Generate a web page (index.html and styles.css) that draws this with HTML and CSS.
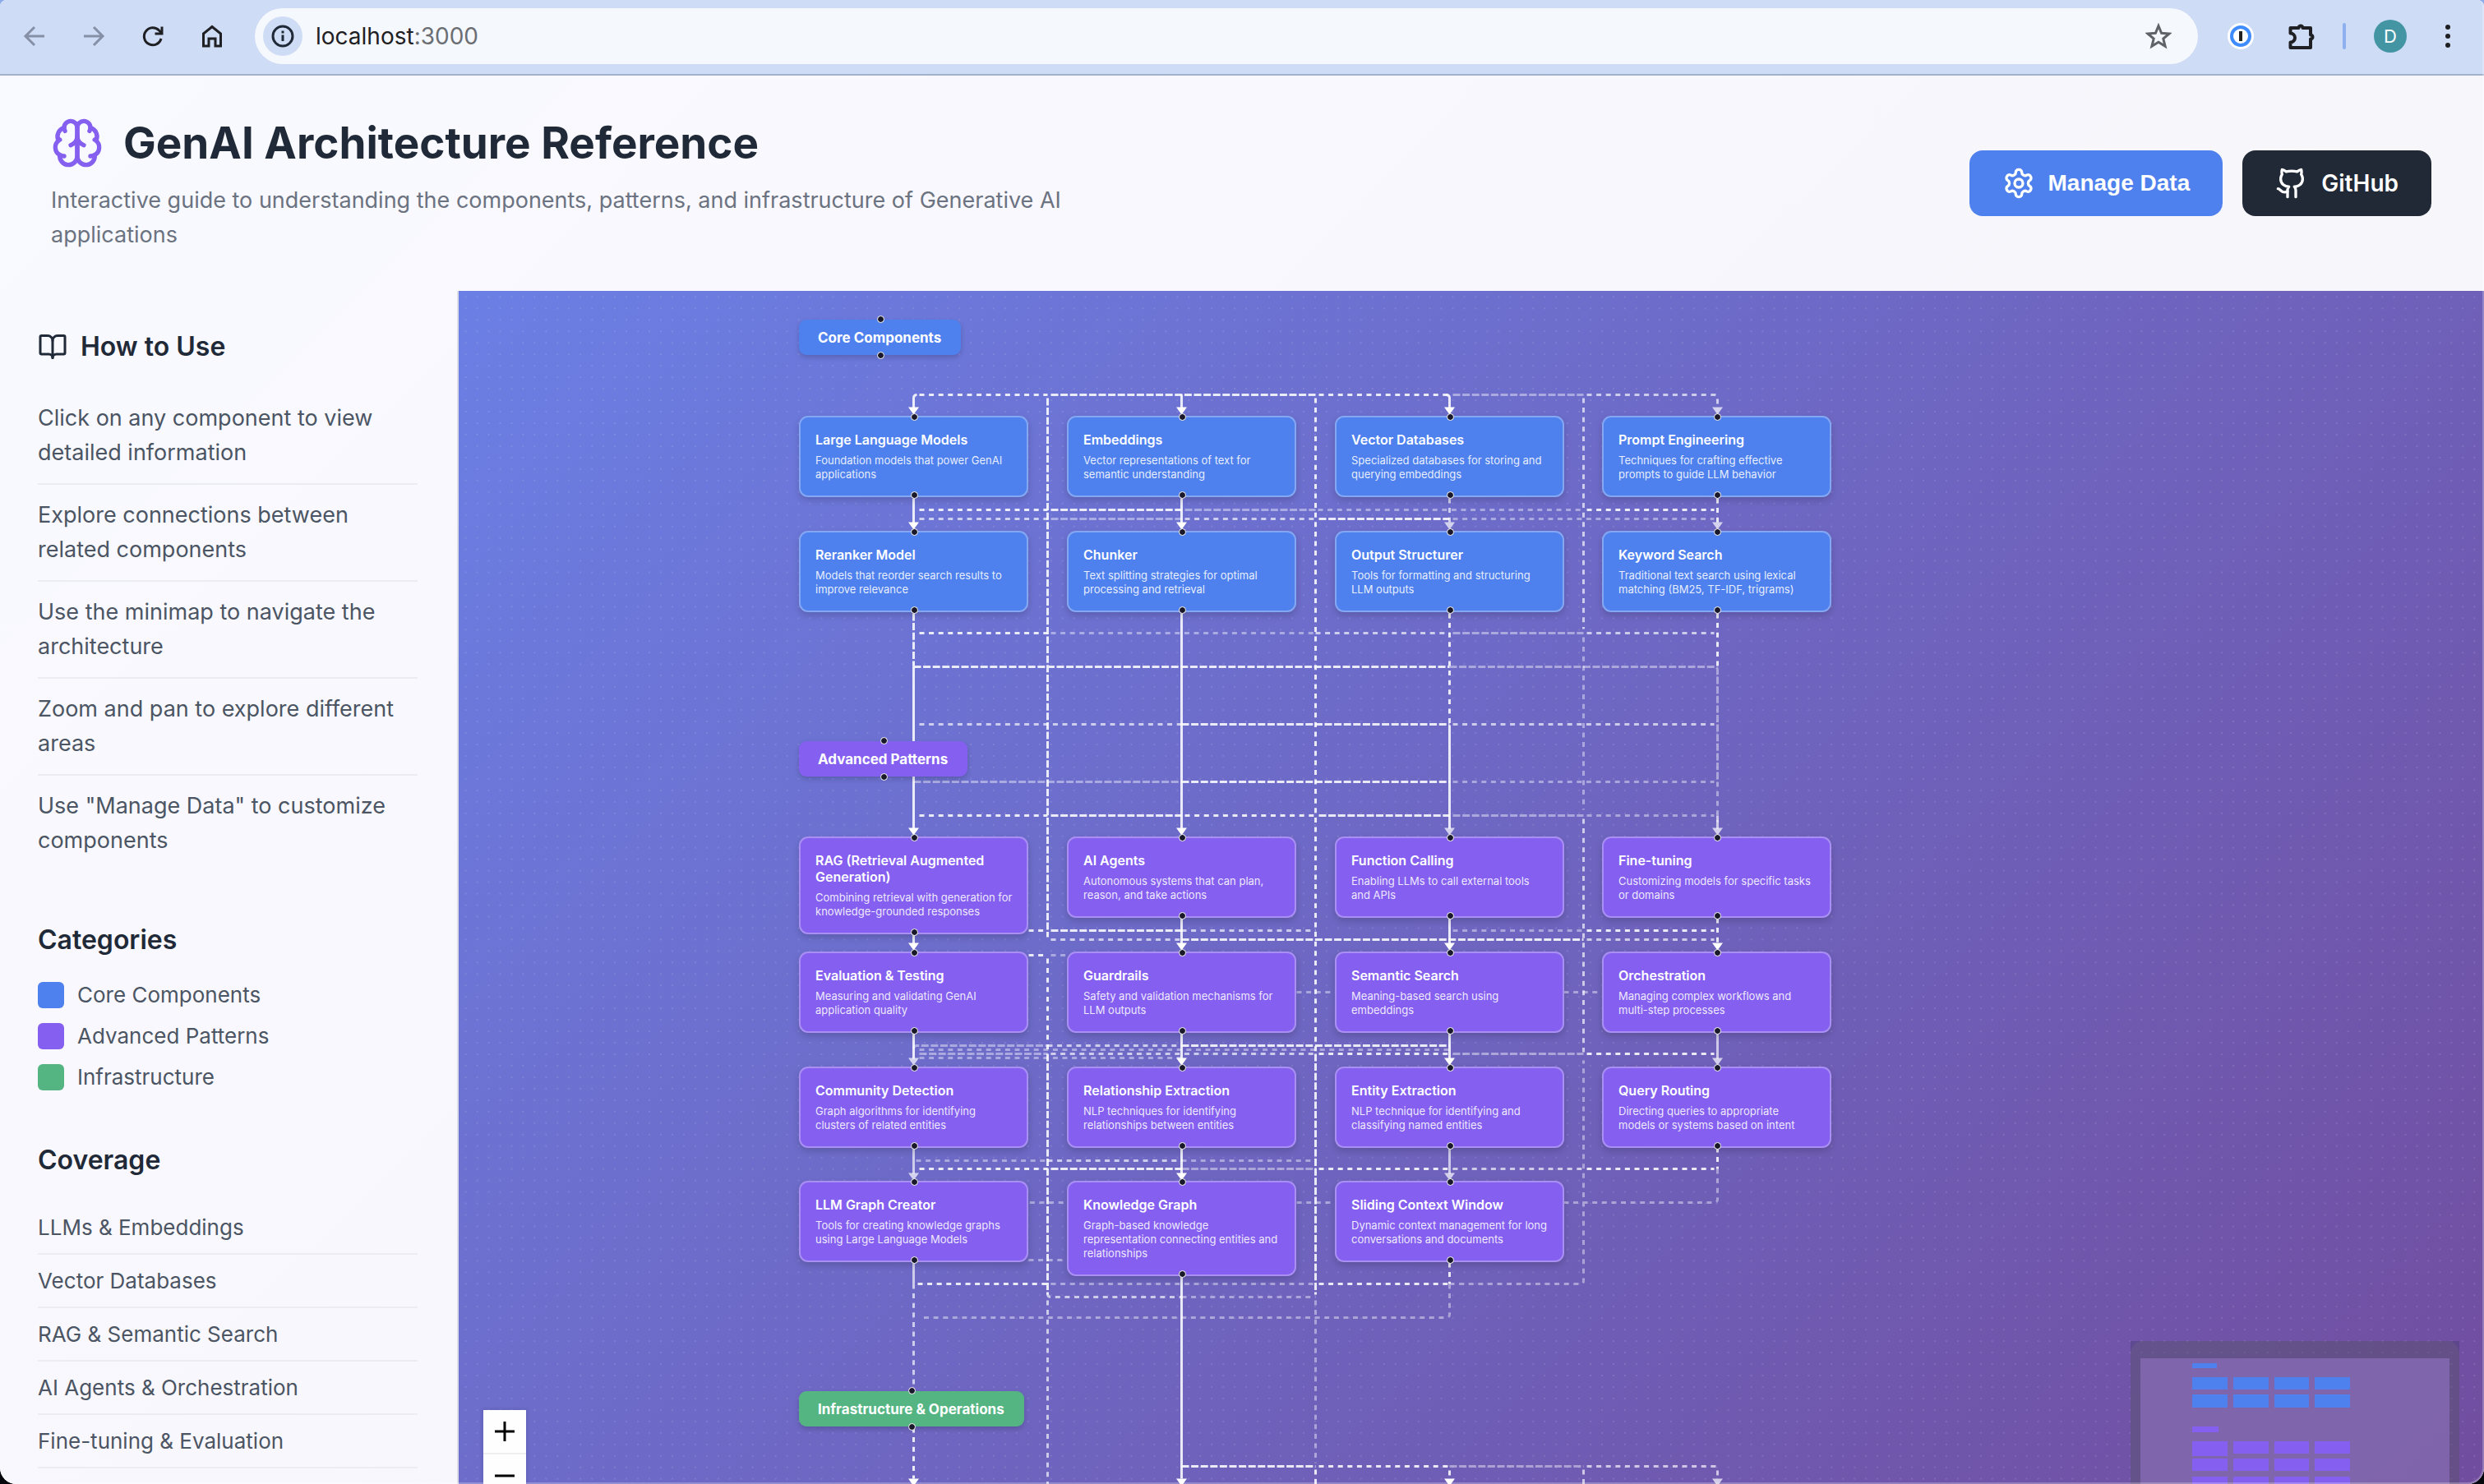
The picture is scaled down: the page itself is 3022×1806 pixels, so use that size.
FILE: index.html
```html
<!DOCTYPE html>
<html lang="en">
<head>
<meta charset="utf-8">
<title>GenAI Architecture Reference</title>
<link rel="stylesheet" href="styles.css">
</head>
<body>
<div class="window">
  <nav class="toolbar" aria-label="Browser toolbar">
    <div class="nav-buttons">
      <button class="tool muted" aria-label="Back"><svg viewBox="0 0 32 32"><path d="M28 16H5M16 5L5 16l11 11"/></svg></button>
      <button class="tool muted" aria-label="Forward"><svg viewBox="0 0 32 32"><path d="M4 16h23M16 5l11 11-11 11"/></svg></button>
      <button class="tool" aria-label="Reload"><svg viewBox="0 0 32 32"><path d="M26 19a10.500 10.500 0 1 1-2.500-10l3 3M27 4.500V13h-8.500"/></svg></button>
      <button class="tool" aria-label="Home"><svg viewBox="0 0 32 32"><path d="M5.500 13L16 4.500 26.500 13v15H20v-9h-8v9H5.500z"/></svg></button>
    </div>
    <div class="omnibox">
      <button class="site-info" aria-label="Site information"><svg viewBox="0 0 32 32"><circle cx="16" cy="16" r="12"/><path d="M16 14.500v7.500M16 9.500v3"/></svg></button>
      <div class="address"><span class="host">localhost</span>:3000</div>
      <button class="tool star" aria-label="Bookmark"><svg viewBox="0 0 32 32"><path d="M16 3.500l3.600 8.800 9.400.7-7.200 6.100 2.300 9.200-8.100-5-8.100 5 2.300-9.200L3 13l9.400-.7z"/></svg></button>
    </div>
    <div class="extensions">
      <button class="tool" aria-label="Password manager"><svg viewBox="0 0 32 32"><circle class="pw-back" cx="16" cy="16" r="16"/><circle class="pw-ring" cx="16" cy="16" r="11"/><path class="pw-key" d="M16 10v12"/></svg></button>
      <button class="tool" aria-label="Extensions"><svg class="puzzle" viewBox="0 0 36 36"><path d="M4.500 8H14.500a2.500 2.500 0 0 1 5 0H29V16.500a2.500 2.500 0 0 1 0 5V32H4.500V25.500a5.500 5.500 0 0 0 0-11z"/></svg></button>
      <span class="divider"></span>
      <button class="avatar" aria-label="Profile">D</button>
      <button class="tool menu" aria-label="Menu"><svg viewBox="0 0 32 32"><circle cx="16" cy="5" r="3"/><circle cx="16" cy="16" r="3"/><circle cx="16" cy="27" r="3"/></svg></button>
    </div>
  </nav>

  <div class="page">
    <header class="header">
      <div class="intro">
        <h1><svg class="icon brain" viewBox="0 0 24 24"><path d="M12 5a3 3 0 1 0-5.997.125 4 4 0 0 0-2.526 5.770 4 4 0 0 0 .556 6.588A4 4 0 1 0 12 18Z"/><path d="M12 5a3 3 0 1 1 5.997.125 4 4 0 0 1 2.526 5.770 4 4 0 0 1-.556 6.588A4 4 0 1 1 12 18Z"/><path d="M15 13a4.500 4.500 0 0 1-3-4 4.500 4.500 0 0 1-3 4"/><path d="M17.599 6.500a3 3 0 0 0 .399-1.375"/><path d="M6.003 5.125A3 3 0 0 0 6.401 6.500"/><path d="M3.477 10.896a4 4 0 0 1 .585-.396"/><path d="M19.938 10.500a4 4 0 0 1 .585.396"/><path d="M6 18a4 4 0 0 1-1.967-.516"/><path d="M19.967 17.484A4 4 0 0 1 18 18"/></svg>GenAI Architecture Reference</h1>
        <p>Interactive guide to understanding the components, patterns, and infrastructure of Generative AI applications</p>
      </div>
      <div class="actions">
        <button class="btn primary"><svg class="icon" viewBox="0 0 24 24"><path d="M12.220 2h-.440a2 2 0 0 0-2 2v.180a2 2 0 0 1-1 1.730l-.430.250a2 2 0 0 1-2 0l-.150-.080a2 2 0 0 0-2.730.730l-.220.380a2 2 0 0 0 .730 2.730l.150.100a2 2 0 0 1 1 1.720v.510a2 2 0 0 1-1 1.740l-.150.090a2 2 0 0 0-.730 2.730l.220.380a2 2 0 0 0 2.730.730l.150-.080a2 2 0 0 1 2 0l.430.250a2 2 0 0 1 1 1.730V20a2 2 0 0 0 2 2h.440a2 2 0 0 0 2-2v-.180a2 2 0 0 1 1-1.730l.430-.250a2 2 0 0 1 2 0l.150.080a2 2 0 0 0 2.730-.730l.220-.390a2 2 0 0 0-.730-2.730l-.150-.080a2 2 0 0 1-1-1.740v-.500a2 2 0 0 1 1-1.740l.150-.090a2 2 0 0 0 .730-2.730l-.220-.380a2 2 0 0 0-2.730-.730l-.150.080a2 2 0 0 1-2 0l-.430-.250a2 2 0 0 1-1-1.730V4a2 2 0 0 0-2-2z"/><circle cx="12" cy="12" r="3"/></svg>Manage Data</button>
        <a class="btn dark" href="#github"><svg class="icon" viewBox="0 0 24 24"><path d="M15 22v-4a4.800 4.800 0 0 0-1-3.500c3 0 6-2 6-5.500.080-1.250-.270-2.480-1-3.500.280-1.150.280-2.350 0-3.500 0 0-1 0-3 1.500-2.640-.500-5.360-.500-8 0C6 2 5 2 5 2c-.300 1.150-.300 2.350 0 3.500A5.403 5.403 0 0 0 4 9c0 3.500 3 5.500 6 5.500-.390.490-.680 1.050-.850 1.650-.170.600-.220 1.230-.150 1.850v4"/><path d="M9 18c-4.510 2-5-2-7-2"/></svg>GitHub</a>
      </div>
    </header>

    <div class="content">
      <aside class="sidebar">
        <section>
          <h2><svg class="icon book" viewBox="0 0 24 24"><path d="M12 7v14"/><path d="M3 18a1 1 0 0 1-1-1V4a1 1 0 0 1 1-1h5a4 4 0 0 1 4 4 4 4 0 0 1 4-4h5a1 1 0 0 1 1 1v13a1 1 0 0 1-1 1h-6a3 3 0 0 0-3 3 3 3 0 0 0-3-3z"/></svg>How to Use</h2>
          <ul class="tips">
            <li>Click on any component to view detailed information</li>
            <li>Explore connections between related components</li>
            <li>Use the minimap to navigate the architecture</li>
            <li>Zoom and pan to explore different areas</li>
            <li>Use "Manage Data" to customize components</li>
          </ul>
        </section>
        <section>
          <h2>Categories</h2>
          <ul class="legend">
            <li><span class="swatch core"></span>Core Components</li>
            <li><span class="swatch advanced"></span>Advanced Patterns</li>
            <li><span class="swatch infra"></span>Infrastructure</li>
          </ul>
        </section>
        <section>
          <h2>Coverage</h2>
          <ul class="coverage">
            <li>LLMs &amp; Embeddings</li>
            <li>Vector Databases</li>
            <li>RAG &amp; Semantic Search</li>
            <li>AI Agents &amp; Orchestration</li>
            <li>Fine-tuning &amp; Evaluation</li>
          </ul>
        </section>
      </aside>

      <main class="canvas">
        <svg class="edges" aria-hidden="true">
          <defs>
            <pattern id="dots" x="1.600" y="0.400" width="13.964" height="13.964" patternUnits="userSpaceOnUse"><circle cx="7" cy="7" r="1"/></pattern>
            <path id="arrow" d="M-6.500 0H6.500L0 9Z"/>
          </defs>
          <rect class="dots" width="100%" height="100%" fill="url(#dots)"/>
          <g transform="translate(-557.500 -353.500)">
            <path class="dash faint" d="M1603 620H1923M1767 631H2085M1278 770H1600M1767 951H2085M1930 992H2085M1767 1132H1926M1278 1162H1298M1577 1207H1624M1902 1207H1949M1118 1277H1763M1118 1287H1437M1114 1412H1274M1437 1412H1600M2089 1422V1459Q2089 1463 2085 1463H1251M1251 1533H1298M1278 1562H1600M1763 1562H1922Q1926 1562 1926 1558V1290M1437 1578H1600M1763 1562V1599Q1763 1603 1759 1603H1118M1926 775V985M1600 1582V1780M2089 951V1000"/>
            <path class="dash mid" d="M1930 480H2085Q2089 480 2089 484V497M1118 631H1274M1441 631H1600M1926 484V765M1600 770H1763M1930 770H2085M1118 881H1437M1767 881H2085M1437 1132H1600M1278 1143H1437M1930 1143H2085M1274 1272H1437M1278 1282H1600M1274 1412H1437M1767 1422H1926M1274 1574Q1274 1578 1278 1578H1437M1111 1562V1690M1274 1582V1960M1930 1784H2085Q2089 1784 2089 1788V1799M1926 996V1280M1926 1788V1960M1763 606V636"/>
            <path class="dash strong" d="M1118 480H1274M1604 480H1763M1600 484V1280M1118 620H1274M1930 620H2085M2089 606V636M1763 746V882M2089 746V811M1118 770H1274M1118 992H1274M1441 992H1600M1251 1132H1274M1930 1132H2085M2089 1117V1148M1251 1162H1274M1274 1166V1280M1604 1282H1763M1930 1282H2085M1118 1422H1274M1604 1422H1763M1930 1422H2085M2089 1396V1422M1116 1562H1274M1604 1562H1763M1763 1536V1562M1111 1737V1799M1604 1784H1759Q1763 1784 1763 1788V1799M1600 1788V1960"/>
            <path class="dense faint" d="M1767 480H1926M1441 620H1600M1278 631H1437M1767 770H1926M1763 811H2085Q2089 811 2089 815V948M1111 951H1437M1767 992H1926M1111 1276Q1111 1272 1115 1272H1274M1118 1282H1274M1767 1282H1926M1437 1422H1600M1763 1784H1926"/>
            <path class="dense strong" d="M1278 480H1600M1274 484V1140M1278 620H1437M1604 631H1763M1111 811H1763M1437 881H1763M1437 951H1763M1278 992H1437M1604 992H1763M1278 1132H1437M1437 1143H1926M1437 1272H1763M1274 1282V1575M1600 1282V1575M1278 1422H1437M1437 1784H1600M1111 746V811"/>
            <path class="line mid" d="M2089 992V1008M2089 1257V1288M1111 1396V1428M1763 1396V1428M1111 1536V1562"/>
            <path class="line strong" d="M1111 497V484Q1111 480 1115 480M1111 606V636M1111 811V1008M1111 1137V1148M1111 1257V1288M1437 480V497M1437 606V636M1437 746V1008M1437 1117V1148M1437 1257V1288M1437 1396V1428M1437 1553V1799M1759 480Q1763 480 1763 484V497M1763 882V1008M1763 1117V1148M1763 1257V1288"/>
            <g class="heads">
              <use href="#arrow" x="1111" y="495"/><use href="#arrow" x="1437" y="495"/><use href="#arrow" x="1763" y="495"/><use class="pale" href="#arrow" x="2089" y="495"/>
              <use href="#arrow" x="1111" y="635"/><use href="#arrow" x="1437" y="635"/><use class="pale" href="#arrow" x="1763" y="635"/><use class="pale" href="#arrow" x="2089" y="635"/>
              <use href="#arrow" x="1111" y="1007"/><use href="#arrow" x="1437" y="1007"/><use class="pale" href="#arrow" x="1763" y="1007"/><use class="pale" href="#arrow" x="2089" y="1007"/>
              <use href="#arrow" x="1111" y="1147"/><use href="#arrow" x="1437" y="1147"/><use href="#arrow" x="1763" y="1147"/><use href="#arrow" x="2089" y="1147"/>
              <use class="pale" href="#arrow" x="1111" y="1287"/><use href="#arrow" x="1437" y="1287"/><use href="#arrow" x="1763" y="1287"/><use class="pale" href="#arrow" x="2089" y="1287"/>
              <use class="pale" href="#arrow" x="1111" y="1427"/><use href="#arrow" x="1437" y="1427"/><use class="pale" href="#arrow" x="1763" y="1427"/>
              <use href="#arrow" x="1111" y="1799"/><use href="#arrow" x="1437" y="1799"/><use href="#arrow" x="1763" y="1799"/><use class="pale" href="#arrow" x="2089" y="1799"/>
            </g>
          </g>
        </svg>

        <div class="group core col1 head1">Core Components</div>
        <div class="group advanced col1 head2">Advanced Patterns</div>
        <div class="group infra col1 head3">Infrastructure &amp; Operations</div>

        <article class="node core col1 row1"><h3>Large Language Models</h3><p>Foundation models that power GenAI applications</p></article>
        <article class="node core col2 row1"><h3>Embeddings</h3><p>Vector representations of text for semantic understanding</p></article>
        <article class="node core col3 row1"><h3>Vector Databases</h3><p>Specialized databases for storing and querying embeddings</p></article>
        <article class="node core col4 row1"><h3>Prompt Engineering</h3><p>Techniques for crafting effective prompts to guide LLM behavior</p></article>
        <article class="node core col1 row2"><h3>Reranker Model</h3><p>Models that reorder search results to improve relevance</p></article>
        <article class="node core col2 row2"><h3>Chunker</h3><p>Text splitting strategies for optimal processing and retrieval</p></article>
        <article class="node core col3 row2"><h3>Output Structurer</h3><p>Tools for formatting and structuring LLM outputs</p></article>
        <article class="node core col4 row2"><h3>Keyword Search</h3><p>Traditional text search using lexical matching (BM25, TF-IDF, trigrams)</p></article>

        <article class="node advanced col1 row3"><h3>RAG (Retrieval Augmented Generation)</h3><p>Combining retrieval with generation for knowledge-grounded responses</p></article>
        <article class="node advanced col2 row3"><h3>AI Agents</h3><p>Autonomous systems that can plan, reason, and take actions</p></article>
        <article class="node advanced col3 row3"><h3>Function Calling</h3><p>Enabling LLMs to call external tools and APIs</p></article>
        <article class="node advanced col4 row3"><h3>Fine-tuning</h3><p>Customizing models for specific tasks or domains</p></article>
        <article class="node advanced col1 row4"><h3>Evaluation &amp; Testing</h3><p>Measuring and validating GenAI application quality</p></article>
        <article class="node advanced col2 row4"><h3>Guardrails</h3><p>Safety and validation mechanisms for LLM outputs</p></article>
        <article class="node advanced col3 row4"><h3>Semantic Search</h3><p>Meaning-based search using embeddings</p></article>
        <article class="node advanced col4 row4"><h3>Orchestration</h3><p>Managing complex workflows and multi-step processes</p></article>
        <article class="node advanced col1 row5"><h3>Community Detection</h3><p>Graph algorithms for identifying clusters of related entities</p></article>
        <article class="node advanced col2 row5"><h3>Relationship Extraction</h3><p>NLP techniques for identifying relationships between entities</p></article>
        <article class="node advanced col3 row5"><h3>Entity Extraction</h3><p>NLP technique for identifying and classifying named entities</p></article>
        <article class="node advanced col4 row5"><h3>Query Routing</h3><p>Directing queries to appropriate models or systems based on intent</p></article>
        <article class="node advanced col1 row6"><h3>LLM Graph Creator</h3><p>Tools for creating knowledge graphs using Large Language Models</p></article>
        <article class="node advanced col2 row6"><h3>Knowledge Graph</h3><p>Graph-based knowledge representation connecting entities and relationships</p></article>
        <article class="node advanced col3 row6"><h3>Sliding Context Window</h3><p>Dynamic context management for long conversations and documents</p></article>

        <div class="controls">
          <button aria-label="Zoom in"><svg viewBox="0 0 24 24"><path d="M0 12h24M12 0v24"/></svg></button>
          <button aria-label="Zoom out"><svg viewBox="0 0 24 24"><path d="M0 12h24"/></svg></button>
          <button aria-label="Fit view"><svg viewBox="0 0 24 24"><path d="M2 9V2h7M15 2h7v7M22 15v7h-7M9 22H2v-7"/></svg></button>
          <button aria-label="Lock"><svg viewBox="0 0 24 24"><path d="M4 11h16v11H4zM8 11V7a4 4 0 0 1 8 0v4"/></svg></button>
        </div>

        <div class="minimap">
          <svg viewBox="0 0 400 300" aria-hidden="true">
            <rect class="mini-frame" width="400" height="300" rx="15"/>
            <rect class="mini-view" x="12" y="21" width="376" height="222"/>
            <path class="mini-core" d="M75 27h30v6H75zM75 44h43v15H75zM125 44h43v15h-43zM175 44h42v15h-42zM224 44h43v15h-43zM75 65h43v16H75zM125 65h43v16h-43zM175 65h42v16h-42zM224 65h43v16h-43z"/>
            <path class="mini-advanced" d="M75 104h32v7H75zM75 122h43v18H75zM125 122h43v15h-43zM175 122h42v15h-42zM224 122h43v15h-43zM75 143h43v15H75zM125 143h43v15h-43zM175 143h42v15h-42zM224 143h43v15h-43zM75 165h43v15H75zM125 165h43v15h-43zM175 165h42v15h-42zM224 165h43v15h-43z"/>
          </svg>
        </div>
      </main>
    </div>
  </div>
</div>
</body>
</html>
```

FILE: styles.css
```css
* { box-sizing: border-box; }

body {
  margin: 0;
  background: linear-gradient(#8aaaea 0 50%, #05070c 50%);
  font-family: Inter, "Liberation Sans", sans-serif;
  color: #1f2937;
}

h1, h2, h3, p, ul { margin: 0; padding: 0; }
ul { list-style: none; }
button { font: inherit; border: 0; padding: 0; background: none; color: inherit; }

.window {
  position: relative;
  display: flex;
  flex-direction: column;
  height: 100vh;
  overflow: hidden;
  border-radius: 8px 8px 20px 20px;
  background: #f8f8fd;
}

/* light rim around the right and bottom window edges */
.window::after {
  content: "";
  position: absolute;
  inset: 0;
  border: solid rgba(255, 255, 255, .25);
  border-width: 0 2px 2px 0;
  border-radius: inherit;
  pointer-events: none;
}

/* Browser toolbar */
.toolbar {
  display: flex;
  flex: none;
  align-items: center;
  height: 92px;
  padding: 0 28px 2px 26px;
  border-bottom: 2px solid #a3b2cc;
  background: #cfdcf5;
}
.nav-buttons { display: flex; gap: 40px; margin-right: 36px; }
.tool { display: flex; color: #1f2023; }
.tool svg, .site-info svg {
  width: 32px;
  height: 32px;
  fill: none;
  stroke: currentColor;
  stroke-width: 3;
}
.tool .puzzle { width: 36px; height: 36px; stroke-width: 4; stroke-linejoin: round; }
.muted { color: #8590a6; }
.omnibox {
  display: flex;
  flex: 1;
  align-items: center;
  height: 68px;
  padding: 0 32px 0 10px;
  border-radius: 34px;
  background: #f5f8fd;
}
.site-info {
  display: flex;
  align-items: center;
  justify-content: center;
  width: 48px;
  height: 48px;
  border-radius: 50%;
  background: #cfdcf5;
}
.address { flex: 1; padding-left: 16px; font-size: 28px; line-height: 34px; color: #6b6e73; }
.host { color: #1f2023; }
.star { color: #5f6368; }
.extensions { display: flex; align-items: center; margin-left: 36px; }
.extensions .tool + .tool { margin-left: 40px; }
.pw-back { fill: #fff; stroke: none; }
.pw-ring { fill: #fff; stroke: #3f8cff; stroke-width: 4; }
.pw-key { stroke: #222; stroke-width: 4; }
.divider { width: 4px; height: 32px; margin: 0 34px 0 32px; border-radius: 2px; background: #8fb0ee; }
.avatar {
  width: 40px;
  height: 40px;
  margin-right: 34px;
  border-radius: 50%;
  background: #4495a4;
  color: #fff;
  font-size: 22px;
  line-height: 40px;
}
.menu svg { fill: currentColor; stroke: none; }

/* Page shell */
.page {
  display: flex;
  flex: none;
  flex-direction: column;
  background: linear-gradient(135deg, #f8faff, #f9f8fe 25%, #f7f6fb 60%);
}
.icon { flex: none; fill: none; stroke: currentColor; stroke-width: 2; stroke-linecap: round; stroke-linejoin: round; }

.header {
  display: flex;
  align-items: center;
  justify-content: space-between;
  padding: 47px 64px 47px 62px;
}
.intro { max-width: 1280px; }
.header h1 {
  display: flex;
  align-items: center;
  gap: 24px;
  height: 70px;
  margin-bottom: 14px;
  font-size: 53px;
  line-height: 70px;
  font-weight: 700;
}
.brain { width: 64px; height: 64px; color: #855fef; }
.header p { font-size: 27px; line-height: 42px; color: #6b7280; }
.actions { display: flex; gap: 24px; }
.btn {
  display: flex;
  align-items: center;
  gap: 16px;
  height: 80px;
  padding: 0 40px;
  border-radius: 16px;
  color: #fff;
  font-size: 28px;
  line-height: 34px;
  font-weight: 600;
  text-decoration: none;
}
.btn .icon { width: 40px; height: 40px; }
.primary { background: #4e81ee; font-family: "Liberation Sans", Arial, sans-serif; font-weight: 700; }
.dark { background: #212936; }

.content { display: flex; min-height: 1608px; }

/* Sidebar */
.sidebar {
  display: flex;
  flex: none;
  flex-direction: column;
  gap: 62px;
  width: 558px;
  padding: 46px 48px 0 46px;
  border-right: 2px solid #dcdde6;
}
.sidebar h2 {
  display: flex;
  align-items: center;
  gap: 16px;
  margin-bottom: 28px;
  font-size: 32px;
  line-height: 44px;
  font-weight: 600;
}
.book { width: 36px; height: 36px; }
.sidebar ul { color: #4b5563; }
.tips li { padding: 16px 0; border-bottom: 2px solid #ecedf1; font-size: 27px; line-height: 42px; }
.tips li:last-child { border-bottom: 0; }
.legend { display: flex; flex-direction: column; gap: 16px; font-size: 26px; line-height: 34px; }
.legend li { display: flex; align-items: center; gap: 16px; }
.swatch { width: 32px; height: 32px; border-radius: 6px; }
.coverage li { padding: 14px 0; border-bottom: 2px solid #ecedf1; font-size: 26px; line-height: 35px; }

.core { background: #4e81ee; }
.advanced { background: #855fef; }
.infra { background: #54b583; }

/* Diagram canvas */
.canvas {
  position: relative;
  flex: 1;
  min-width: 0;
  overflow: hidden;
  background: linear-gradient(135deg, #6b7fe4, #714b9c);
}
.edges { position: absolute; inset: 0; width: 100%; height: 100%; fill: none; stroke: #fff; stroke-width: 3; }
#dots circle { fill: rgba(255, 255, 255, .15); stroke: none; }
.dots { stroke: none; }
.dash { stroke-dasharray: 6 5.6; }
.dense { stroke-dasharray: 9 2.6; }
.faint { stroke-opacity: .42; }
.mid { stroke-opacity: .66; }
.strong { stroke-opacity: .86; }
.heads { fill: #fff; stroke: none; }
.pale { fill-opacity: .7; }

.group, .node { position: absolute; color: #fff; }
.group {
  height: 43px;
  padding: 0 24px 0 23px;
  border-radius: 9px;
  box-shadow: 0 3px 6px rgba(0, 0, 0, .18);
  font-size: 17px;
  line-height: 44px;
  font-weight: 700;
  white-space: nowrap;
}
.node {
  width: 279px;
  padding: 17px 16px 17px 18px;
  border: 2px solid rgba(255, 255, 255, .3);
  border-radius: 11px;
  box-shadow: 0 4px 8px rgba(0, 0, 0, .16);
}
.node h3 { margin-bottom: 7px; font-size: 16px; line-height: 20px; font-weight: 600; }
.node p { font-size: 13px; line-height: 17px; color: rgba(255, 255, 255, .88); }

/* connection handles */
.group::before, .group::after, .node::before, .node::after {
  content: "";
  position: absolute;
  left: 50%;
  width: 7px;
  height: 7px;
  margin-left: -4px;
  border: 1px solid #fff;
  border-radius: 50%;
  background: #1a192b;
}
.group::before, .node::before { top: -5px; }
.group::after { bottom: -5px; }
.node::after { bottom: -4px; }

.col1 { left: 414px; }
.col2 { left: 740px; }
.col3 { left: 1066px; }
.col4 { left: 1391px; }
.head1 { top: 35px; }
.head2 { top: 548px; }
.head3 { top: 1339px; }
.row1 { top: 152px; }
.row2 { top: 292px; }
.row3 { top: 664px; }
.row4 { top: 804px; }
.row5 { top: 944px; }
.row6 { top: 1083px; }

.controls { position: absolute; left: 30px; bottom: 30px; box-shadow: 0 0 4px 2px rgba(0, 0, 0, .08); }
.controls button {
  display: flex;
  align-items: center;
  justify-content: center;
  width: 52px;
  height: 54px;
  border-bottom: 2px solid #eee;
  background: #fefefe;
}
.controls svg { width: 24px; height: 24px; fill: none; stroke: #000; stroke-width: 3; }

.minimap { position: absolute; right: 30px; bottom: 30px; width: 400px; height: 300px; background: rgba(50, 50, 90, .3); }
.minimap svg { display: block; width: 400px; height: 300px; }
.mini-frame { fill: rgba(130, 120, 120, .2); }
.mini-view { fill: #8166ad; fill-opacity: .94; }
.mini-core { fill: #4e81ee; }
.mini-advanced { fill: #855fef; }
```
